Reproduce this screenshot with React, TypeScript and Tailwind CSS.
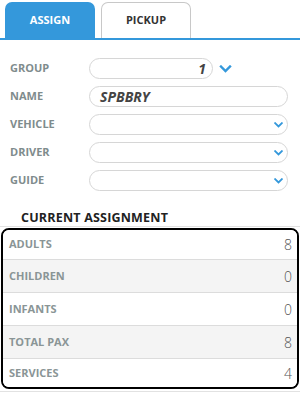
import React from 'react';

const rows = [
    { label: 'ADULTS', value: 8, h: 'h-[29px]' },
    { label: 'CHILDREN', value: 0, h: 'h-[33px]' },
    { label: 'INFANTS', value: 0, h: 'h-[33px]' },
    { label: 'TOTAL PAX', value: 8, h: 'h-[33px]' },
    { label: 'SERVICES', value: 4, h: 'h-[29px]' },
];

function Chevron({ className }: { className?: string }) {
    return (
        <svg viewBox="0 0 12 8" className={className} fill="none" stroke="currentColor" strokeWidth="2.4" strokeLinecap="square">
            <path d="M1.5 1.5 L6 6 L10.5 1.5" />
        </svg>
    );
}

function SelectField() {
    return (
        <div className="flex h-[21px] w-[199px] items-center justify-end rounded-full border border-[#d6d6d6] bg-white pr-[4px]">
            <Chevron className="h-[6px] w-[9px] text-[#3498db]" />
        </div>
    );
}

export default function App() {
    return (
        <div className="h-[393px] w-[300px] overflow-hidden bg-white font-['Open_Sans',sans-serif]">
            <div className="flex items-end gap-[6px] border-b-2 border-[#3498db] pl-[5px] pt-[2px]">
                <div className="flex h-[36px] w-[90px] items-center justify-center rounded-t-[7px] bg-[#3498db] text-[11px] font-bold text-white">
                    ASSIGN
                </div>
                <div className="flex h-[36px] w-[90px] items-center justify-center rounded-t-[7px] border border-b-0 border-[#c8c8c8] text-[11px] font-bold text-[#333]">
                    PICKUP
                </div>
            </div>

            <div className="flex flex-col gap-[7px] pl-[10px] pt-[18px]">
                <div className="flex items-center">
                    <span className="w-[79px] text-[11px] font-bold text-[#7f8c8d]">GROUP</span>
                    <div className="flex h-[21px] w-[124px] items-center justify-end rounded-full border border-[#d6d6d6] pr-[6px] text-[14px] font-bold italic text-[#444]">
                        1
                    </div>
                    <Chevron className="ml-[6px] h-[8px] w-[13px] text-[#3498db]" />
                </div>
                <div className="flex items-center">
                    <span className="w-[79px] text-[11px] font-bold text-[#7f8c8d]">NAME</span>
                    <div className="flex h-[21px] w-[199px] items-center rounded-full border border-[#d6d6d6] pl-[10px] text-[14px] font-bold italic text-[#444]">
                        SPBBRY
                    </div>
                </div>
                <div className="flex items-center">
                    <span className="w-[79px] text-[11px] font-bold text-[#7f8c8d]">VEHICLE</span>
                    <SelectField />
                </div>
                <div className="flex items-center">
                    <span className="w-[79px] text-[11px] font-bold text-[#7f8c8d]">DRIVER</span>
                    <SelectField />
                </div>
                <div className="flex items-center">
                    <span className="w-[79px] text-[11px] font-bold text-[#7f8c8d]">GUIDE</span>
                    <SelectField />
                </div>
            </div>

            <div className="mt-[18px] h-[18px] border-b border-[#e2e2e2] pl-[21px] text-[12.5px] font-bold leading-[17px] tracking-[0.2px] text-[#222]">
                CURRENT ASSIGNMENT
            </div>
            <div className="ml-[1px] mr-[1px] mt-[1px] overflow-hidden rounded-[8px] border-2 border-black">
                {rows.map((r, i) => (
                    <div
                        key={r.label}
                        className={`flex items-center justify-between pl-[6px] pr-[5px] ${r.h} ${i > 0 ? 'border-t border-[#dcdcdc]' : ''} ${i % 2 === 1 ? 'bg-[#f4f4f4]' : 'bg-white'}`}
                    >
                        <span className="text-[11px] font-bold text-[#8a9596]">{r.label}</span>
                        <span className="text-[14px] font-light text-[#555]">{r.value}</span>
                    </div>
                ))}
            </div>
            <div className="mt-[2px] border-t border-[#e2e2e2]" />
        </div>
    );
}
